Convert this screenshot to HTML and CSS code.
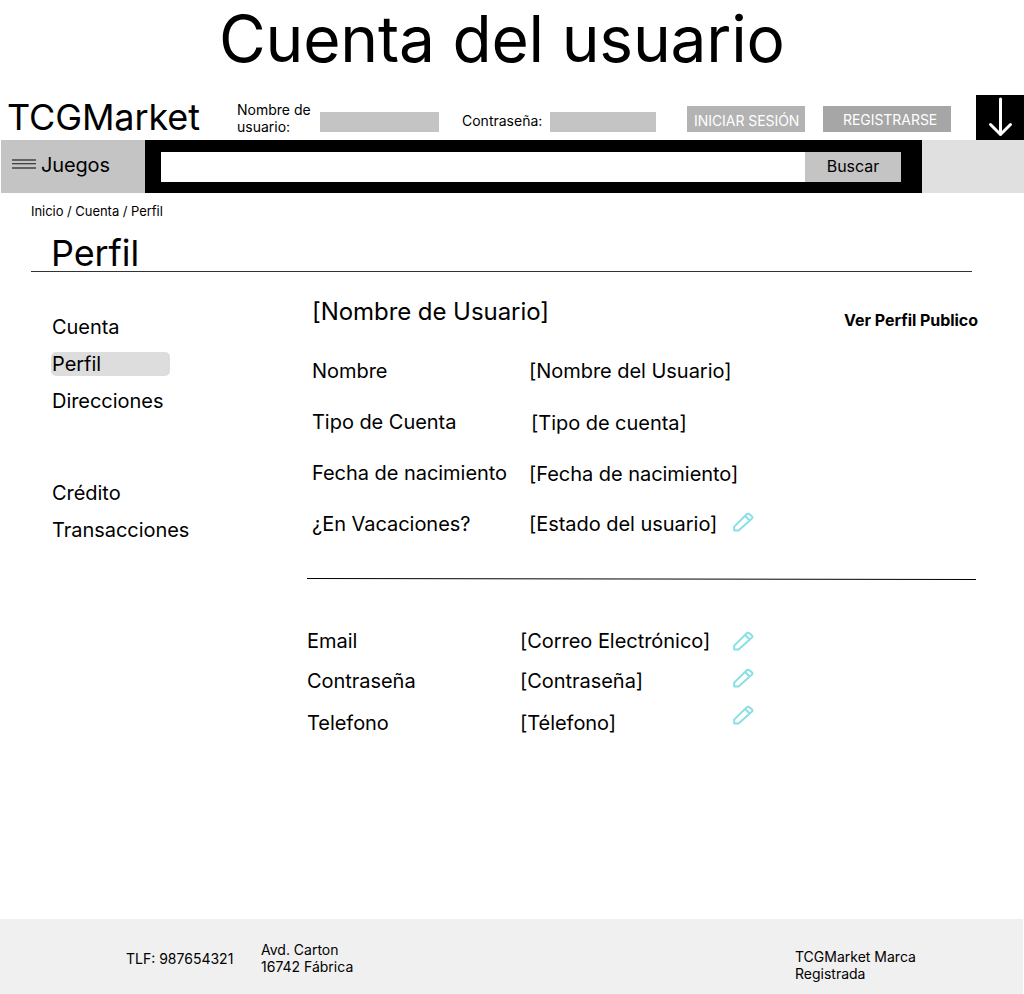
FILE: index.html
```html
<!DOCTYPE html>
<html lang="es">
<head>
<meta charset="utf-8">
<title>Cuenta del usuario</title>
<link rel="stylesheet" href="styles.css">
</head>
<body>
<svg class="defs" width="0" height="0">
  <symbol id="pencil" viewBox="0 0 22 20">
    <path d="M2.2 18.4V14.6L14.5 2.5Q16.1 1 17.7 2.4L19.8 4.2Q21.2 5.4 19.7 6.8L6.6 18.4ZM13.1 4L17.7 8.5"/>
  </symbol>
</svg>
<h1 class="title">Cuenta del usuario</h1>
<header class="header">
  <div class="logo">TCGMarket</div>
  <label class="user-label">Nombre de<br>usuario:</label>
  <div class="field user-field"></div>
  <label class="pass-label">Contraseña:</label>
  <div class="field pass-field"></div>
  <div class="btn login">INICIAR SESIÓN</div>
  <div class="btn register">REGISTRARSE</div>
  <div class="download">
    <svg width="48" height="45" viewBox="0 0 48 45"><path d="M24.5 4V39.5M14.5 29.5L24.5 39.5L34.5 29.5"/></svg>
  </div>
</header>
<nav class="nav">
  <div class="games">
    <svg class="burger" width="24" height="10" viewBox="0 0 24 10"><path class="soft" d="M0 1H24M0 9H24"/><path d="M0 4.5H24"/><path class="faint" d="M0 5.5H24"/></svg>
    <span>Juegos</span>
  </div>
  <div class="search"><div class="query"></div><div class="go">Buscar</div></div>
</nav>
<div class="crumbs">Inicio / Cuenta / Perfil</div>
<h2 class="heading">Perfil</h2>
<div class="columns">
  <aside class="side">
    <div>Cuenta</div>
    <div class="active">Perfil</div>
    <div>Direcciones</div>
    <div class="second">Crédito</div>
    <div>Transacciones</div>
  </aside>
  <main class="main">
    <div class="top"><div class="name">[Nombre de Usuario]</div><div class="public">Ver Perfil Publico</div></div>
    <div class="rows">
      <div class="row"><span>Nombre</span><span>[Nombre del Usuario]</span></div>
      <div class="row low"><span>Tipo de Cuenta</span><span class="inset">[Tipo de cuenta]</span></div>
      <div class="row low"><span>Fecha de nacimiento</span><span>[Fecha de nacimiento]</span></div>
      <div class="row"><span>¿En Vacaciones?</span><span>[Estado del usuario]</span><svg class="pencil"><use href="#pencil"/></svg></div>
    </div>
    <svg class="rule" width="669" height="3" viewBox="0 0 669 3"><path d="M0 .5L669 1.5"/></svg>
    <div class="contact">
      <div class="labels"><span>Email</span><span>Contraseña</span><span>Telefono</span></div>
      <div class="labels"><span>[Correo Electrónico]</span><span>[Contraseña]</span><span>[Télefono]</span></div>
      <div class="icons"><svg class="pencil"><use href="#pencil"/></svg><svg class="pencil"><use href="#pencil"/></svg><svg class="pencil"><use href="#pencil"/></svg></div>
    </div>
  </main>
</div>
<footer class="footer">
  <div class="phone">TLF: 987654321</div>
  <div class="address">Avd. Carton<br>16742 Fábrica</div>
  <div class="brand">TCGMarket Marca<br>Registrada</div>
</footer>
</body>
</html>
```
FILE: styles.css
```css
* { box-sizing: border-box; }
body {
  margin: 0;
  height: 994px;
  display: flex;
  flex-direction: column;
  background: #fff;
  color: #000;
  font-family: Inter, "Liberation Sans", sans-serif;
  font-size: 20px;
  line-height: 24px;
  letter-spacing: -0.04px;
  white-space: nowrap;
  overflow: hidden;
}
svg { display: block; fill: none; stroke: #000; flex: none; }
.defs { height: 0; }
.title { margin: 0; height: 95px; padding-left: 219px; font-size: 64px; line-height: 77px; font-weight: 400; letter-spacing: -0.2px; }
.header { height: 45px; display: flex; align-items: flex-start; font-size: 14px; line-height: 17px; letter-spacing: 0; }
.logo { width: 237px; padding-left: 7px; font-size: 36px; line-height: 44px; letter-spacing: -0.12px; }
.user-label { width: 83px; padding-top: 6px; }
.field { height: 20px; margin-top: 17px; background: #c4c4c4; }
.user-field { width: 119px; }
.pass-label { width: 111px; padding: 17px 0 0 23px; }
.pass-field { width: 106px; }
.btn { height: 26px; margin-top: 11px; color: #fff; letter-spacing: -0.05px; }
.login { width: 118px; margin-left: 31px; padding: 6px 0 0 7px; background: #b3b3b3; }
.register { width: 128px; margin-left: 18px; padding: 5px 0 0 20px; background: #a6a6a6; }
.download { width: 48px; height: 45px; margin-left: 25px; background: #000; }
.download svg { stroke: #fff; stroke-width: 3; stroke-linecap: round; stroke-linejoin: round; }
.nav { height: 53px; margin-left: 1px; display: flex; background: #e0e0e0; }
.games { width: 144px; display: flex; padding: 13px 0 0 11px; background: #c4c4c4; letter-spacing: -0.15px; }
.burger { margin: 6px 5px 0 0; stroke: #444; }
.burger .soft { stroke: #626262; stroke-width: 2; }
.burger .faint { stroke: #999; }
.search { width: 777px; padding: 12px 21px 11px 16px; display: flex; background: #000; }
.query { flex: 1; background: #fff; }
.go { width: 96px; background: #c4c4c4; font-size: 16px; line-height: 28px; text-align: center; }
.crumbs { margin: 10px 0 0 31px; font-size: 13px; line-height: 16px; }
.heading { width: 941px; height: 41px; margin: 12px 0 0 31px; padding-left: 20px; border-bottom: 1px solid #333; font-size: 36px; line-height: 44px; font-weight: 400; letter-spacing: -0.1px; }
.columns { display: flex; }
.side { width: 307px; padding: 43px 0 0 51px; display: flex; flex-direction: column; gap: 13px; }
.side div { width: 119px; padding-left: 1px; }
.side .active { background: #ddd; border-radius: 5px; }
.side .second { margin-top: 55px; }
.main { width: 671px; }
.top { display: flex; justify-content: space-between; padding: 25px 0 0 5px; }
.name { font-size: 24px; line-height: 29px; letter-spacing: -0.06px; }
.public { margin-top: 14px; font-size: 16px; line-height: 19px; font-weight: 700; }
.rows { margin-top: 29px; padding-left: 5px; display: flex; flex-direction: column; gap: 27px; }
.row { height: 24px; display: grid; grid-template-columns: 217px 203px 22px; }
.low span + span { padding-top: 1px; }
.row .inset { padding-left: 2px; }
.pencil { width: 22px; height: 20px; stroke: #88e0e6; stroke-width: 2; stroke-linejoin: round; }
.rule { margin-top: 42px; }
.contact { margin-top: 48px; display: grid; grid-template-columns: 213px 212px 22px; }
.labels { display: flex; flex-direction: column; gap: 16px; }
.labels span:last-child { margin-top: 2px; }
.icons { display: flex; flex-direction: column; gap: 17px; padding-top: 2px; }
.footer { height: 75px; margin: auto 1px 0 0; display: flex; background: #f0f0f0; font-size: 14px; line-height: 17px; letter-spacing: 0; }
.phone { padding: 31px 0 0 126px; width: 261px; }
.address { width: 534px; padding-top: 22px; }
.brand { padding-top: 29px; }
```
